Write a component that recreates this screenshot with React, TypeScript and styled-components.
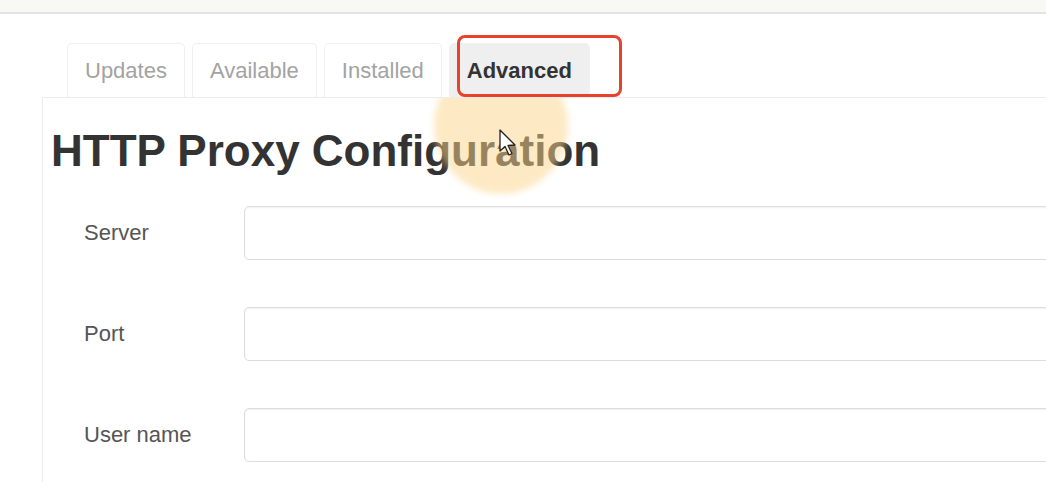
import * as React from 'react';
import styled, { createGlobalStyle } from 'styled-components';

const GlobalStyle = createGlobalStyle`
  html, body {
    margin: 0;
    padding: 0;
    background: #fff;
    overflow: hidden;
    font-family: "Liberation Sans", Arial, sans-serif;
  }
`;

const Page = styled.div`
  width: 1046px;
  height: 482px;
  overflow: hidden;
  position: relative;
`;

const TopBar = styled.div`
  height: 12px;
  background: #f8f9f4;
  border-bottom: 2px solid #e2e4df;
`;

const Content = styled.div`
  width: 1140px;
  padding: 29px 0 0 42px;
`;

const TabBar = styled.div`
  display: flex;
  gap: 7px;
  padding-left: 25px;
  position: relative;
`;

const Tab = styled.div<{ $active?: boolean }>`
  height: 54px;
  box-sizing: border-box;
  display: flex;
  align-items: center;
  padding: 0 17px;
  font-size: 22px;
  border: 1px solid #f0f0f0;
  border-bottom: none;
  border-radius: 5px 5px 0 0;
  color: ${p => (p.$active ? '#333' : '#a3a3a3')};
  font-weight: ${p => (p.$active ? 700 : 400)};
  background: ${p => (p.$active ? '#efefef' : '#fff')};
`;

// red annotation box drawn over the active tab
const Highlight = styled.div`
  position: absolute;
  left: 415px;
  top: -8px;
  width: 165px;
  height: 62px;
  box-sizing: border-box;
  border: 3px solid #e8412c;
  border-radius: 8px;
`;

const Panel = styled.div`
  border-top: 1px solid #ececec;
  border-left: 1px solid #ececec;
  padding: 29px 0 0 8px;
  position: relative;
  overflow: hidden;
  height: 400px;
`;

const Glow = styled.div`
  position: absolute;
  left: 391px;
  top: -40px;
  width: 134px;
  height: 136px;
  border-radius: 50%;
  background: rgba(252, 213, 140, 0.5);
  filter: blur(3px);
  pointer-events: none;
`;

const Heading = styled.h1`
  margin: 0;
  font-size: 44px;
  line-height: 48px;
  font-weight: 700;
  color: #333;
`;

const Form = styled.div`
  display: flex;
  flex-direction: column;
  gap: 47px;
  margin-top: 31px;
  padding-left: 33px;
`;

const Row = styled.div`
  display: flex;
  align-items: center;
`;

const Label = styled.label`
  width: 160px;
  flex: none;
  font-size: 22px;
  color: #555;
`;

const Input = styled.input`
  flex: 1;
  height: 54px;
  box-sizing: border-box;
  border: 1px solid #dcdcdc;
  border-radius: 5px;
  box-shadow: inset 0 1px 2px rgba(0, 0, 0, 0.06);
  background: #fff;
  outline: none;
`;

const Cursor = styled.svg`
  position: absolute;
  left: 499px;
  top: 129px;
`;

const tabs = ['Updates', 'Available', 'Installed', 'Advanced'];
const fields = ['Server', 'Port', 'User name'];

export default function App() {
  return (
    <Page>
      <GlobalStyle />
      <TopBar />
      <Content>
        <TabBar>
          {tabs.map(t => (
            <Tab key={t} $active={t === 'Advanced'}>
              {t}
            </Tab>
          ))}
          <Highlight />
        </TabBar>
        <Panel>
          <Glow />
          <Heading>HTTP Proxy Configuration</Heading>
          <Form>
            {fields.map(f => (
              <Row key={f}>
                <Label>{f}</Label>
                <Input />
              </Row>
            ))}
          </Form>
        </Panel>
      </Content>
      <Cursor width="18" height="28" viewBox="0 0 18 28">
        <path
          d="M1 1 L1 22 L6 17.5 L10 26 L13 24.5 L9 16.5 L16 16 Z"
          fill="#fff"
          stroke="#222"
          strokeWidth="1.3"
          strokeLinejoin="round"
        />
      </Cursor>
    </Page>
  );
}
